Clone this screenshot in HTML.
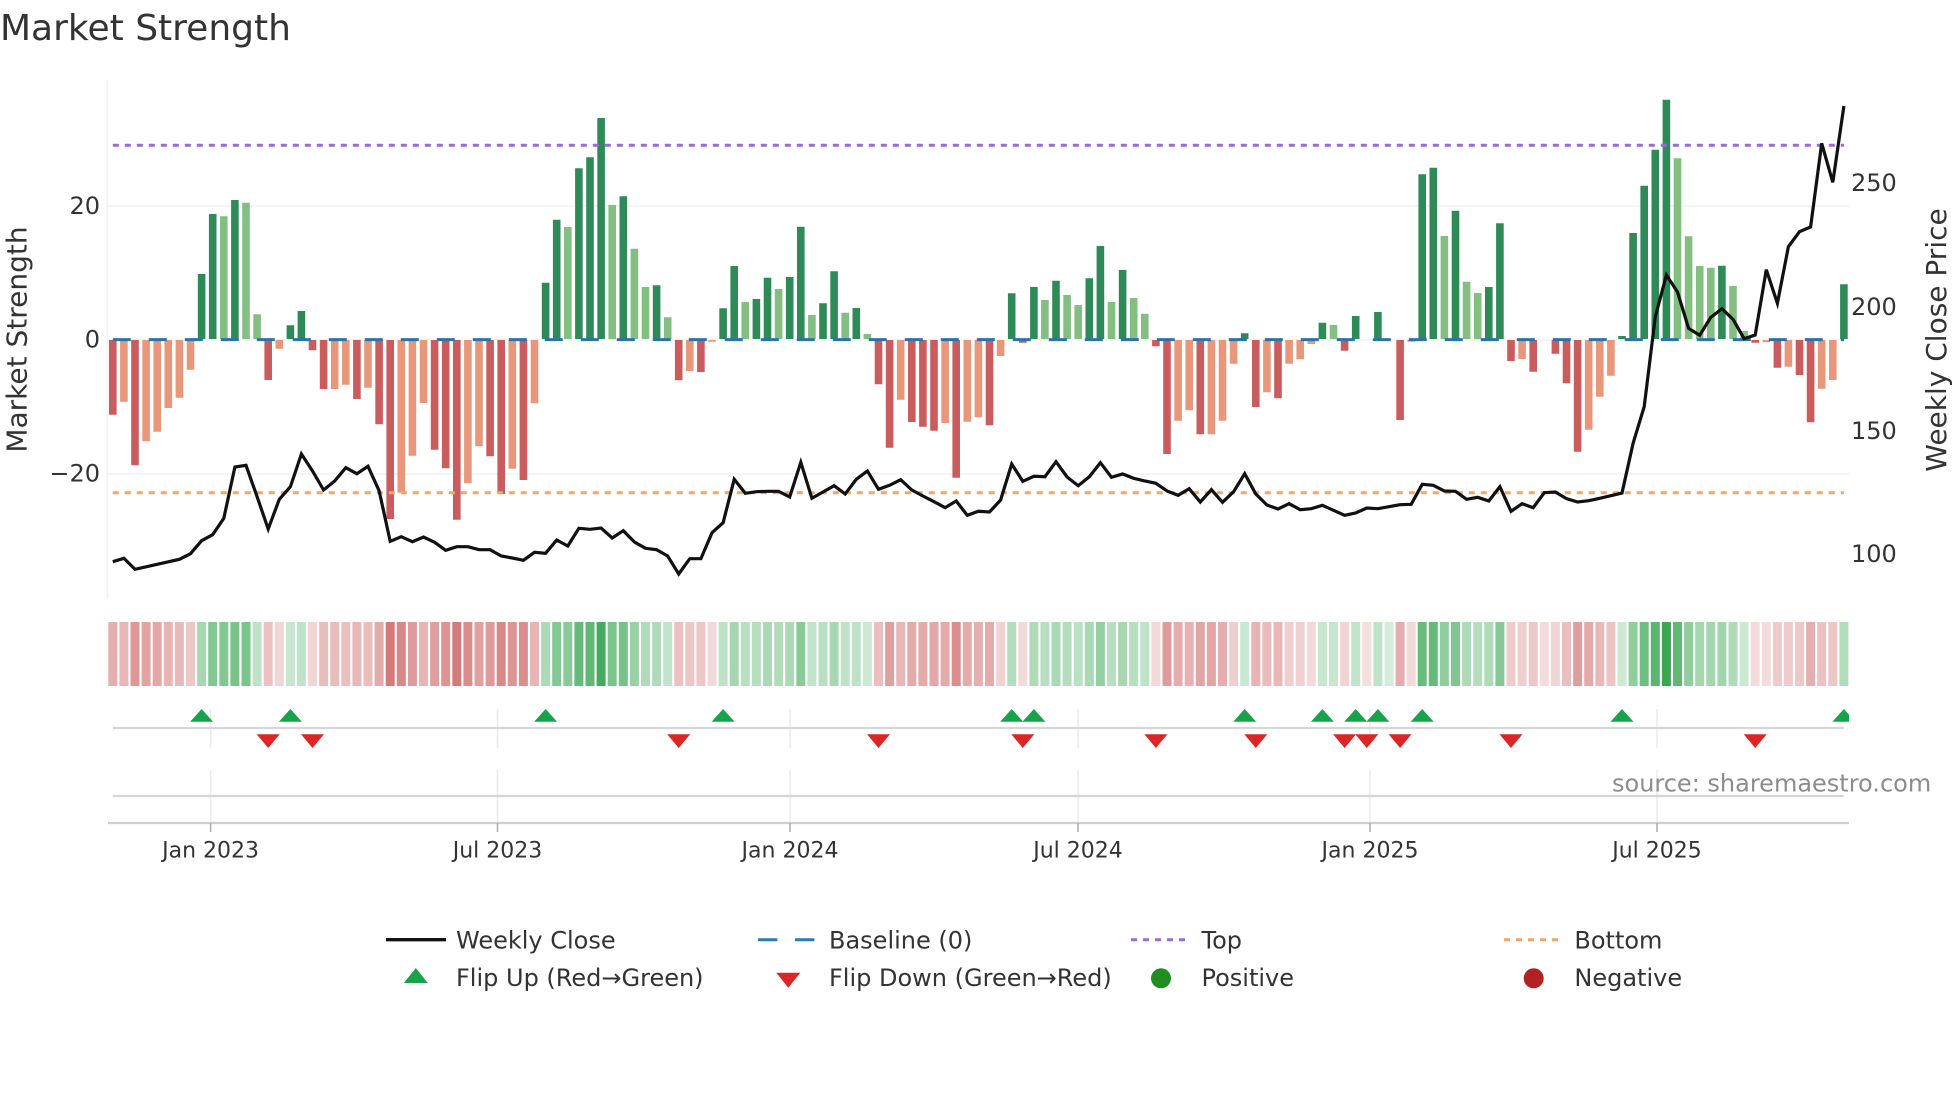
<!DOCTYPE html>
<html lang="en">
<head>
<meta charset="utf-8">
<title>Market Strength</title>
<style>
html,body{margin:0;padding:0;background:#fff;width:1960px;height:1102px;overflow:hidden}
svg{display:block;filter:blur(.35px)}
text{font-family:"DejaVu Sans","Liberation Sans",sans-serif;fill:#333}
</style>
</head>
<body>
<svg xmlns="http://www.w3.org/2000/svg" width="1960" height="1102" viewBox="0 0 1960 1102">
<rect width="1960" height="1102" fill="#fff"/>
<text x="0" y="40" font-size="36">Market Strength</text>

<!-- grid -->
<g stroke="#f1f2f5" stroke-width="1.6" fill="none">
<path d="M107.5 80V599"/>
<path d="M107 206H1849M107 474H1849M107 340H1849"/>
</g>

<!-- bars -->
<g fill="none" stroke-width="7.6">
<path stroke="#2e8b57" d="M201.6 339V274M212.7 339V214M234.9 339V200M290.4 339V325.3M301.4 339V311M545.6 339V282.7M556.7 339V219.7M578.9 339V168.3M590 339V157.3M601.1 339V118M623.3 339V196.3M656.6 339V285.3M723.1 339V308.3M734.2 339V266M756.4 339V299M767.5 339V277.7M789.7 339V277M800.8 339V226.7M823 339V303.3M834.1 339V271.3M856.3 339V308M1011.7 339V293.3M1033.9 339V287M1056 339V280.7M1089.3 339V278.3M1100.4 339V246M1122.6 339V270M1244.7 339V333.3M1322.4 339V322.7M1355.7 339V316M1377.9 339V312M1422.2 339V174.3M1433.3 339V167.7M1455.5 339V210.7M1488.8 339V287M1499.9 339V223.3M1622 339V336M1633.1 339V233M1644.2 339V185.7M1655.3 339V149.7M1666.4 339V99.7M1721.9 339V265.7M1843.9 339V284.3"/>
<path stroke="#82bf80" d="M223.8 339V216.3M246 339V202.7M257.1 339V314.3M567.8 339V227M612.2 339V205M634.4 339V248.7M645.5 339V287M667.7 339V317.3M745.3 339V302M778.6 339V289M811.9 339V315M845.2 339V312.7M867.4 339V334M1044.9 339V300M1067.1 339V295M1078.2 339V305M1111.5 339V302M1133.7 339V298M1144.8 339V313.7M1333.5 339V325M1444.4 339V236M1466.6 339V281.7M1477.7 339V293M1677.5 339V158.3M1688.6 339V236.3M1699.7 339V266M1710.8 339V267.7M1733 339V286M1744.1 339V331"/>
<path stroke="#cb5c5e" d="M112.8 340V414.7M135 340V465.3M268.2 340V380M312.5 340V350.3M323.6 340V389M356.9 340V399M379.1 340V424.3M390.2 340V519M434.6 340V449.7M445.7 340V468.3M456.8 340V519.7M490.1 340V456.3M501.2 340V494M523.4 340V480M678.7 340V380.3M700.9 340V372M878.5 340V384.3M889.6 340V447.7M911.8 340V422M922.9 340V426.7M934 340V430.7M956.2 340V477.7M989.5 340V425.3M1022.8 340V342.7M1155.9 340V346.3M1167 340V454M1200.3 340V434.3M1255.8 340V407M1278 340V398.3M1344.6 340V350.7M1400.1 340V420M1511 340V361M1533.2 340V371.7M1555.4 340V353.7M1566.5 340V383.3M1577.6 340V451.7M1755.2 340V342.7M1777.4 340V367.7M1799.5 340V375M1810.6 340V422.3"/>
<path stroke="#e8977a" d="M123.9 340V401.7M146.1 340V441.3M157.2 340V431.7M168.3 340V408M179.4 340V397.7M190.5 340V369.7M279.3 340V348.7M334.7 340V389M345.8 340V384.7M368 340V387.7M401.3 340V492.7M412.4 340V455.7M423.5 340V403M467.9 340V483.3M479 340V446.3M512.3 340V468.7M534.5 340V403.3M689.8 340V371M712 340V341.7M900.7 340V399.7M945.1 340V423M967.3 340V421.7M978.4 340V417.3M1000.6 340V356M1178.1 340V420.7M1189.2 340V410.3M1211.4 340V434.3M1222.5 340V420.7M1233.6 340V363.7M1266.9 340V392.3M1289.1 340V363.7M1300.2 340V359.3M1311.3 340V344M1411.2 340V341.7M1522.1 340V359M1588.7 340V429.7M1599.8 340V396.7M1610.9 340V375.7M1766.3 340V342.3M1788.4 340V366.7M1821.7 340V388.7M1832.8 340V380"/>
</g>

<!-- reference lines -->
<path d="M112.8 339.6H1844" stroke="#2a74ab" stroke-width="3" stroke-dasharray="18 18" fill="none"/>
<path d="M112.8 145.3H1844" stroke="#9a6ad9" stroke-width="3" stroke-dasharray="6 6" fill="none"/>
<path d="M112.8 492.7H1844" stroke="#f2a766" stroke-width="3" stroke-dasharray="6 6" fill="none"/>

<!-- weekly close -->
<path fill="none" stroke="#111" stroke-width="3.2" stroke-linejoin="miter" d="M112.8 561.7L123.9 558.3L135 569.3L146.1 566.8L157.2 564.3L168.3 561.8L179.4 559.3L190.5 553.7L201.6 540.7L212.7 534.7L223.8 518.3L234.9 467L246 465.3L257.1 496.7L268.2 529L279.3 499.3L290.4 486.7L301.4 454L312.5 471L323.6 490L334.7 481L345.8 467.7L356.9 473.7L368 466.3L379.1 490.7L390.2 541.3L401.3 536.7L412.4 541.7L423.5 537L434.6 542.3L445.7 550.3L456.8 546.7L467.9 546.7L479 549.7L490.1 549.7L501.2 556L512.3 558L523.4 560.3L534.5 552.3L545.6 553.3L556.7 540L567.8 546L578.9 528.3L590 529.3L601.1 528L612.2 538L623.3 530.7L634.4 542L645.5 548.3L656.6 549.7L667.7 556L678.7 574L689.8 558.7L700.9 558.7L712 532.7L723.1 522.7L734.2 479.3L745.3 493.3L756.4 491.7L767.5 491.3L778.6 491.3L789.7 497L800.8 462.3L811.9 498.3L823 492L834.1 485.7L845.2 494L856.3 479.3L867.4 471L878.5 489.3L889.6 485.3L900.7 479.7L911.8 490L922.9 496L934 501.7L945.1 507.7L956.2 501L967.3 515.3L978.4 511.3L989.5 512L1000.6 500L1011.7 464L1022.8 481.3L1033.9 476.3L1044.9 476.7L1056 461.7L1067.1 477L1078.2 485.7L1089.3 476.7L1100.4 462.7L1111.5 477.3L1122.6 474L1133.7 478.3L1144.8 481L1155.9 483.3L1167 491L1178.1 495.3L1189.2 488.7L1200.3 502L1211.4 489.7L1222.5 502.3L1233.6 491.7L1244.7 473.7L1255.8 494L1266.9 505L1278 509L1289.1 503.7L1300.2 509.7L1311.3 508.7L1322.4 505.3L1333.5 510.3L1344.6 515.3L1355.7 513L1366.8 508L1377.9 508.7L1389 506.7L1400.1 504.7L1411.2 504.3L1422.2 484.3L1433.3 485.3L1444.4 491L1455.5 491.3L1466.6 499.3L1477.7 497.3L1488.8 501L1499.9 486.7L1511 511.3L1522.1 503.7L1533.2 507.7L1544.3 492.7L1555.4 492L1566.5 498.7L1577.6 502L1588.7 500.7L1599.8 498.3L1610.9 495.7L1622 493L1633.1 443.3L1644.2 406.7L1655.3 316.7L1666.4 275L1677.5 292L1688.6 328.3L1699.7 335.3L1710.8 317.3L1721.9 308.7L1733 319.3L1744.1 338.7L1755.2 335L1766.3 269.7L1777.4 303.3L1788.4 246.7L1799.5 231.7L1810.6 227L1821.7 143.3L1832.8 182.3L1843.9 106"/>

<!-- heat strip -->
<g>
<g fill="#be3232">
<path d="M108.3 622h9v64h-9z" fill-opacity=".39"/><path d="M119.4 622h9v64h-9z" fill-opacity=".35"/><path d="M130.5 622h9v64h-9z" fill-opacity=".51"/><path d="M141.6 622h9v64h-9z" fill-opacity=".45"/><path d="M152.7 622h9v64h-9z" fill-opacity=".43"/><path d="M163.8 622h9v64h-9z" fill-opacity=".37"/><path d="M174.9 622h9v64h-9z" fill-opacity=".34"/><path d="M186 622h9v64h-9z" fill-opacity=".27"/>
<path d="M263.7 622h9v64h-9z" fill-opacity=".3"/><path d="M274.8 622h9v64h-9z" fill-opacity=".2"/>
<path d="M308 622h9v64h-9z" fill-opacity=".21"/><path d="M319.1 622h9v64h-9z" fill-opacity=".32"/><path d="M330.2 622h9v64h-9z" fill-opacity=".32"/><path d="M341.3 622h9v64h-9z" fill-opacity=".31"/><path d="M352.4 622h9v64h-9z" fill-opacity=".35"/><path d="M363.5 622h9v64h-9z" fill-opacity=".32"/><path d="M374.6 622h9v64h-9z" fill-opacity=".41"/><path d="M385.7 622h9v64h-9z" fill-opacity=".65"/><path d="M396.8 622h9v64h-9z" fill-opacity=".58"/><path d="M407.9 622h9v64h-9z" fill-opacity=".49"/><path d="M419 622h9v64h-9z" fill-opacity=".36"/><path d="M430.1 622h9v64h-9z" fill-opacity=".47"/><path d="M441.2 622h9v64h-9z" fill-opacity=".52"/><path d="M452.3 622h9v64h-9z" fill-opacity=".65"/><path d="M463.4 622h9v64h-9z" fill-opacity=".56"/><path d="M474.5 622h9v64h-9z" fill-opacity=".46"/><path d="M485.6 622h9v64h-9z" fill-opacity=".49"/><path d="M496.7 622h9v64h-9z" fill-opacity=".58"/><path d="M507.8 622h9v64h-9z" fill-opacity=".52"/><path d="M518.9 622h9v64h-9z" fill-opacity=".55"/><path d="M530 622h9v64h-9z" fill-opacity=".36"/>
<path d="M674.2 622h9v64h-9z" fill-opacity=".3"/><path d="M685.3 622h9v64h-9z" fill-opacity=".28"/><path d="M696.4 622h9v64h-9z" fill-opacity=".28"/><path d="M707.5 622h9v64h-9z" fill-opacity=".18"/>
<path d="M874 622h9v64h-9z" fill-opacity=".31"/><path d="M885.1 622h9v64h-9z" fill-opacity=".47"/><path d="M896.2 622h9v64h-9z" fill-opacity=".35"/><path d="M907.3 622h9v64h-9z" fill-opacity=".41"/><path d="M918.4 622h9v64h-9z" fill-opacity=".42"/><path d="M929.5 622h9v64h-9z" fill-opacity=".43"/><path d="M940.6 622h9v64h-9z" fill-opacity=".41"/><path d="M951.7 622h9v64h-9z" fill-opacity=".55"/><path d="M962.8 622h9v64h-9z" fill-opacity=".41"/><path d="M973.9 622h9v64h-9z" fill-opacity=".39"/><path d="M985 622h9v64h-9z" fill-opacity=".41"/><path d="M996.1 622h9v64h-9z" fill-opacity=".22"/>
<path d="M1018.3 622h9v64h-9z" fill-opacity=".18"/>
<path d="M1151.4 622h9v64h-9z" fill-opacity=".18"/><path d="M1162.5 622h9v64h-9z" fill-opacity=".49"/><path d="M1173.6 622h9v64h-9z" fill-opacity=".4"/><path d="M1184.7 622h9v64h-9z" fill-opacity=".38"/><path d="M1195.8 622h9v64h-9z" fill-opacity=".44"/><path d="M1206.9 622h9v64h-9z" fill-opacity=".44"/><path d="M1218 622h9v64h-9z" fill-opacity=".4"/><path d="M1229.1 622h9v64h-9z" fill-opacity=".24"/>
<path d="M1251.3 622h9v64h-9z" fill-opacity=".37"/><path d="M1262.4 622h9v64h-9z" fill-opacity=".33"/><path d="M1273.5 622h9v64h-9z" fill-opacity=".35"/><path d="M1284.6 622h9v64h-9z" fill-opacity=".24"/><path d="M1295.7 622h9v64h-9z" fill-opacity=".23"/><path d="M1306.8 622h9v64h-9z" fill-opacity=".18"/>
<path d="M1340.1 622h9v64h-9z" fill-opacity=".21"/><path d="M1362.3 622h9v64h-9z" fill-opacity=".16"/>
<path d="M1395.6 622h9v64h-9z" fill-opacity=".4"/><path d="M1406.7 622h9v64h-9z" fill-opacity=".18"/>
<path d="M1506.5 622h9v64h-9z" fill-opacity=".25"/><path d="M1517.6 622h9v64h-9z" fill-opacity=".24"/><path d="M1528.7 622h9v64h-9z" fill-opacity=".27"/><path d="M1539.8 622h9v64h-9z" fill-opacity=".17"/><path d="M1550.9 622h9v64h-9z" fill-opacity=".21"/><path d="M1562 622h9v64h-9z" fill-opacity=".31"/><path d="M1573.1 622h9v64h-9z" fill-opacity=".48"/><path d="M1584.2 622h9v64h-9z" fill-opacity=".42"/><path d="M1595.3 622h9v64h-9z" fill-opacity=".34"/><path d="M1606.4 622h9v64h-9z" fill-opacity=".29"/>
<path d="M1750.7 622h9v64h-9z" fill-opacity=".17"/><path d="M1761.8 622h9v64h-9z" fill-opacity=".17"/><path d="M1772.9 622h9v64h-9z" fill-opacity=".25"/><path d="M1783.9 622h9v64h-9z" fill-opacity=".25"/><path d="M1795 622h9v64h-9z" fill-opacity=".27"/><path d="M1806.1 622h9v64h-9z" fill-opacity=".39"/><path d="M1817.2 622h9v64h-9z" fill-opacity=".3"/><path d="M1828.3 622h9v64h-9z" fill-opacity=".28"/>
</g>
<g fill="#149632">
<path d="M197.1 622h9v64h-9z" fill-opacity=".37"/><path d="M208.2 622h9v64h-9z" fill-opacity=".53"/><path d="M219.3 622h9v64h-9z" fill-opacity=".53"/><path d="M230.4 622h9v64h-9z" fill-opacity=".57"/><path d="M241.5 622h9v64h-9z" fill-opacity=".56"/><path d="M252.6 622h9v64h-9z" fill-opacity=".27"/>
<path d="M285.9 622h9v64h-9z" fill-opacity=".24"/><path d="M296.9 622h9v64h-9z" fill-opacity=".27"/>
<path d="M541.1 622h9v64h-9z" fill-opacity=".35"/><path d="M552.2 622h9v64h-9z" fill-opacity=".52"/><path d="M563.3 622h9v64h-9z" fill-opacity=".5"/><path d="M574.4 622h9v64h-9z" fill-opacity=".65"/><path d="M585.5 622h9v64h-9z" fill-opacity=".68"/><path d="M596.6 622h9v64h-9z" fill-opacity=".79"/><path d="M607.7 622h9v64h-9z" fill-opacity=".56"/><path d="M618.8 622h9v64h-9z" fill-opacity=".58"/><path d="M629.9 622h9v64h-9z" fill-opacity=".44"/><path d="M641 622h9v64h-9z" fill-opacity=".34"/><path d="M652.1 622h9v64h-9z" fill-opacity=".34"/><path d="M663.2 622h9v64h-9z" fill-opacity=".26"/>
<path d="M718.6 622h9v64h-9z" fill-opacity=".28"/><path d="M729.7 622h9v64h-9z" fill-opacity=".39"/><path d="M740.8 622h9v64h-9z" fill-opacity=".3"/><path d="M751.9 622h9v64h-9z" fill-opacity=".31"/><path d="M763 622h9v64h-9z" fill-opacity=".36"/><path d="M774.1 622h9v64h-9z" fill-opacity=".33"/><path d="M785.2 622h9v64h-9z" fill-opacity=".36"/><path d="M796.3 622h9v64h-9z" fill-opacity=".5"/><path d="M807.4 622h9v64h-9z" fill-opacity=".26"/><path d="M818.5 622h9v64h-9z" fill-opacity=".3"/><path d="M829.6 622h9v64h-9z" fill-opacity=".38"/><path d="M840.7 622h9v64h-9z" fill-opacity=".27"/><path d="M851.8 622h9v64h-9z" fill-opacity=".28"/><path d="M862.9 622h9v64h-9z" fill-opacity=".21"/>
<path d="M1007.2 622h9v64h-9z" fill-opacity=".32"/><path d="M1029.4 622h9v64h-9z" fill-opacity=".34"/><path d="M1040.4 622h9v64h-9z" fill-opacity=".3"/><path d="M1051.5 622h9v64h-9z" fill-opacity=".36"/><path d="M1062.6 622h9v64h-9z" fill-opacity=".32"/><path d="M1073.7 622h9v64h-9z" fill-opacity=".29"/><path d="M1084.8 622h9v64h-9z" fill-opacity=".36"/><path d="M1095.9 622h9v64h-9z" fill-opacity=".45"/><path d="M1107 622h9v64h-9z" fill-opacity=".3"/><path d="M1118.1 622h9v64h-9z" fill-opacity=".38"/><path d="M1129.2 622h9v64h-9z" fill-opacity=".31"/><path d="M1140.3 622h9v64h-9z" fill-opacity=".27"/>
<path d="M1240.2 622h9v64h-9z" fill-opacity=".22"/>
<path d="M1317.9 622h9v64h-9z" fill-opacity=".24"/><path d="M1329 622h9v64h-9z" fill-opacity=".24"/><path d="M1351.2 622h9v64h-9z" fill-opacity=".26"/><path d="M1373.4 622h9v64h-9z" fill-opacity=".27"/><path d="M1384.5 622h9v64h-9z" fill-opacity=".18"/>
<path d="M1417.7 622h9v64h-9z" fill-opacity=".64"/><path d="M1428.8 622h9v64h-9z" fill-opacity=".66"/><path d="M1439.9 622h9v64h-9z" fill-opacity=".47"/><path d="M1451 622h9v64h-9z" fill-opacity=".54"/><path d="M1462.1 622h9v64h-9z" fill-opacity=".35"/><path d="M1473.2 622h9v64h-9z" fill-opacity=".32"/><path d="M1484.3 622h9v64h-9z" fill-opacity=".34"/><path d="M1495.4 622h9v64h-9z" fill-opacity=".51"/>
<path d="M1617.5 622h9v64h-9z" fill-opacity=".21"/><path d="M1628.6 622h9v64h-9z" fill-opacity=".48"/><path d="M1639.7 622h9v64h-9z" fill-opacity=".61"/><path d="M1650.8 622h9v64h-9z" fill-opacity=".7"/><path d="M1661.9 622h9v64h-9z" fill-opacity=".84"/><path d="M1673 622h9v64h-9z" fill-opacity=".68"/><path d="M1684.1 622h9v64h-9z" fill-opacity=".47"/><path d="M1695.2 622h9v64h-9z" fill-opacity=".39"/><path d="M1706.3 622h9v64h-9z" fill-opacity=".39"/><path d="M1717.4 622h9v64h-9z" fill-opacity=".4"/><path d="M1728.5 622h9v64h-9z" fill-opacity=".34"/><path d="M1739.6 622h9v64h-9z" fill-opacity=".22"/>
<path d="M1839.4 622h9v64h-9z" fill-opacity=".33"/>
</g>
</g>

<!-- lower panels: gridlines -->
<g stroke="#e9ebef" stroke-width="1.5" fill="none">
<path d="M210.6 709V748M497.5 709V748M790 709V748M1078 709V748M1370 709V748M1657 709V748"/>
<path d="M210.6 770V823M497.5 770V823M790 770V823M1078 770V823M1370 770V823M1657 770V823"/>
</g>
<path d="M113 728H1843.7M113 796H1843.7" stroke="#d6d6d9" stroke-width="2.2" fill="none"/>
<path d="M108 823H1849" stroke="#cfcfcf" stroke-width="2.2" fill="none"/>
<path d="M210.6 823V832M497.5 823V832M790 823V832M1078 823V832M1370 823V832M1657 823V832" stroke="#aaa" stroke-width="1.5" fill="none"/>

<!-- flip markers -->
<path fill="#16a34a" d="M201.6 709l11.5 12.7h-23zM290.4 709l11.5 12.7h-23zM545.6 709l11.5 12.7h-23zM723.1 709l11.5 12.7h-23zM1011.7 709l11.5 12.7h-23zM1033.9 709l11.5 12.7h-23zM1244.7 709l11.5 12.7h-23zM1322.4 709l11.5 12.7h-23zM1355.7 709l11.5 12.7h-23zM1377.9 709l11.5 12.7h-23zM1422.2 709l11.5 12.7h-23zM1622 709l11.5 12.7h-23zM1843.9 709L1849 714.6V721.7H1832.4z"/>
<path fill="#dc2626" d="M268.2 748l11.5-13.7h-23zM312.5 748l11.5-13.7h-23zM678.7 748l11.5-13.7h-23zM878.5 748l11.5-13.7h-23zM1022.8 748l11.5-13.7h-23zM1155.9 748l11.5-13.7h-23zM1255.8 748l11.5-13.7h-23zM1344.6 748l11.5-13.7h-23zM1366.8 748l11.5-13.7h-23zM1400.1 748l11.5-13.7h-23zM1511 748l11.5-13.7h-23zM1755.2 748l11.5-13.7h-23z"/>

<!-- tick labels -->
<g font-size="24">
<text x="100" y="214" text-anchor="end">20</text>
<text x="100" y="347.5" text-anchor="end">0</text>
<text x="100" y="481.7" text-anchor="end">−20</text>
<text x="1851" y="191">250</text>
<text x="1851" y="315">200</text>
<text x="1851" y="439">150</text>
<text x="1851" y="562">100</text>
</g>
<g font-size="22" text-anchor="middle">
<text x="210.6" y="857.7">Jan 2023</text>
<text x="497.5" y="857.7">Jul 2023</text>
<text x="790" y="857.7">Jan 2024</text>
<text x="1078" y="857.7">Jul 2024</text>
<text x="1370" y="857.7">Jan 2025</text>
<text x="1657" y="857.7">Jul 2025</text>
</g>

<!-- axis titles -->
<text font-size="28" text-anchor="middle" transform="translate(26.7 339.5) rotate(-90)">Market Strength</text>
<text font-size="28" text-anchor="middle" transform="translate(1946 340) rotate(-90)">Weekly Close Price</text>

<!-- source -->
<text x="1612" y="791.7" font-size="24" style="fill:#8c8c8c">source: sharemaestro.com</text>

<!-- legend -->
<path d="M386 939.7H446" stroke="#111" stroke-width="3.4" fill="none"/>
<path d="M758 939.7H814.5" stroke="#2a7ab5" stroke-width="3" stroke-dasharray="19.4 17.6" fill="none"/>
<path d="M1131 939.7H1186" stroke="#9a6ad9" stroke-width="3" stroke-dasharray="6 6" fill="none"/>
<path d="M1504 939.7H1559" stroke="#f2a766" stroke-width="3" stroke-dasharray="6 6" fill="none"/>
<path d="M415.8 968l12 15h-24z" fill="#16a34a"/>
<path d="M788.3 987.7l12-15h-24z" fill="#dc2626"/>
<circle cx="1161" cy="978.3" r="10" fill="#228b22"/>
<circle cx="1533.7" cy="978.3" r="10" fill="#b22222"/>
<g font-size="24">
<text x="456" y="948.3">Weekly Close</text>
<text x="829" y="948.3">Baseline (0)</text>
<text x="1201.5" y="948.3">Top</text>
<text x="1574.4" y="948.3">Bottom</text>
<text x="456" y="986">Flip Up (Red→Green)</text>
<text x="829" y="986">Flip Down (Green→Red)</text>
<text x="1201.5" y="986">Positive</text>
<text x="1574.4" y="986">Negative</text>
</g>
</svg>
</body>
</html>
